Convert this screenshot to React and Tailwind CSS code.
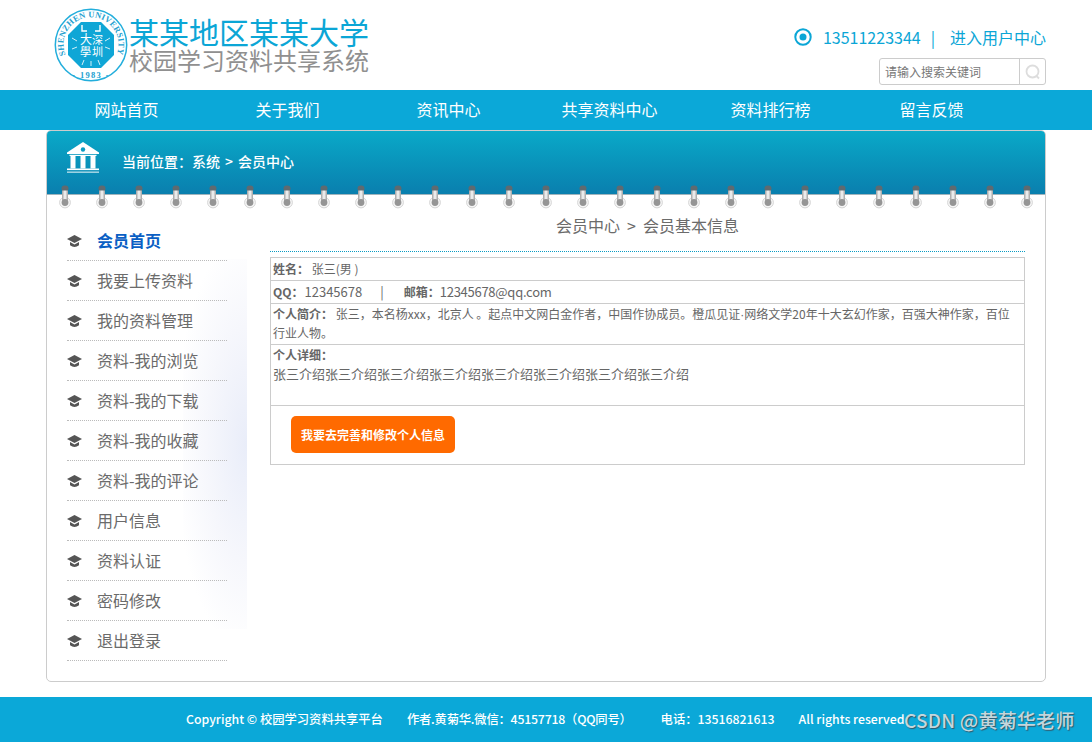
import React from "react";

const font = { fontFamily: '"Noto Sans CJK SC", sans-serif' };
const navItems = ["网站首页", "关于我们", "资讯中心", "共享资料中心", "资料排行榜", "留言反馈"];
const menu = ["会员首页", "我要上传资料", "我的资料管理", "资料-我的浏览", "资料-我的下载", "资料-我的收藏", "资料-我的评论", "用户信息", "资料认证", "密码修改", "退出登录"];

function Seal() {
  return (
    <svg width="74" height="74" viewBox="0 0 74 74" className="shrink-0">
      <defs>
        <path id="arcTop" d="M11.5 47 A27.5 27.5 0 1 1 62.5 47" />
      </defs>
      <circle cx="37" cy="37" r="35.7" fill="none" stroke="#23aedc" strokeWidth="1.5" />
      <polygon points="27,14 47,14 60,27 60,47 47,60 27,60 14,47 14,27" fill="#0fa6d6" />
      <text fontSize="8.5" fontWeight="700" fill="#23a0cf" style={{ fontFamily: '"Liberation Serif", serif' }}>
        <textPath href="#arcTop" textLength="106" lengthAdjust="spacing">SHENZHEN UNIVERSITY</textPath>
      </text>
      <text x="37" y="70" textAnchor="middle" fontSize="8.5" fontWeight="700" fill="#23a0cf" letterSpacing="1.3" style={{ fontFamily: '"Liberation Serif", serif' }}>· 1983 ·</text>
      <path d="M28 17v6h5M46 17v6h-5" fill="none" stroke="#fff" strokeWidth="1.4" />
      <text x="26" y="36" fontSize="12" fill="#fff" style={font}>大</text>
      <text x="38" y="36" fontSize="11" fill="#fff" style={font}>深</text>
      <text x="26" y="48" fontSize="11" fill="#fff" style={font}>學</text>
      <text x="38" y="48" fontSize="11" fill="#fff" style={font}>圳</text>
      <path d="M18 30l5 3M18 41l5-2M56 30l-5 3M56 41l-5-2M28 57l2-5M37 58v-5M46 57l-2-5" stroke="#d5f0f8" strokeWidth="1" />
    </svg>
  );
}

function Bank() {
  return (
    <svg width="32" height="31" viewBox="0 0 32 31" fill="#fff">
      <path d="M16 0L32 10.5V12H0V10.5Z" />
      <circle cx="16" cy="7.5" r="2.2" fill="#0a9cc3" />
      <rect x="2.5" y="12.8" width="27" height="1.2" />
      <rect x="3.5" y="14" width="5" height="12.5" />
      <rect x="13.5" y="14" width="5" height="12.5" />
      <rect x="23.5" y="14" width="5" height="12.5" />
      <rect x="0" y="26.5" width="32" height="1.6" />
      <rect x="0" y="29.4" width="32" height="1.6" opacity="0.6" />
    </svg>
  );
}

function Ring() {
  return (
    <svg width="12" height="25" viewBox="0 0 12 25" className="shrink-0">
      <circle cx="6" cy="18.5" r="5.4" fill="#f6f6f6" stroke="#d4d4d4" strokeWidth="1" />
      <rect x="2.5" y="1.5" width="7" height="6" rx="3" fill="#5f6a70" />
      <rect x="3" y="6.5" width="6" height="10" fill="url(#ringBody)" />
      <circle cx="6" cy="18.5" r="3.4" fill="#959595" />
    </svg>
  );
}

function Cap() {
  return (
    <svg width="15" height="13" viewBox="0 0 15 13" fill="#555555" className="shrink-0 mt-[4px]">
      <path d="M7.5 0L15 4L7.5 8L0 4Z" />
      <path d="M3 7L7.5 9.4L12 7V10.2Q7.5 13.8 3 10.2Z" />
    </svg>
  );
}

function Row({ className = "", children }) {
  return <div className={`border-b border-[#cccccc] px-[2px] ${className}`}>{children}</div>;
}

export default function App() {
  return (
    <div className="w-[1092px] h-[742px] overflow-hidden bg-white flex flex-col text-[#666666]" style={font}>
      <svg width="0" height="0" className="absolute">
        <defs>
          <linearGradient id="ringBody" x1="0" x2="1" y1="0" y2="0">
            <stop offset="0" stopColor="#a0a0a0" />
            <stop offset="0.5" stopColor="#fafafa" />
            <stop offset="1" stopColor="#a0a0a0" />
          </linearGradient>
        </defs>
      </svg>

      <header className="h-[90px] shrink-0 flex justify-between pl-[54px] pr-[46px]">
        <div className="flex items-start pt-[8px]">
          <Seal />
          <div className="ml-[1px] pt-[6px] flex flex-col items-start">
            <div className="text-[30px] leading-[34px] text-[#0ba6d6] whitespace-nowrap">某某地区某某大学</div>
            <div className="text-[24px] leading-[24px] text-[#909090] whitespace-nowrap">校园学习资料共享系统</div>
          </div>
        </div>
        <div className="flex flex-col items-end pt-[25px]">
          <div className="flex items-center h-[24px] text-[16px] text-[#0ba6d6] whitespace-nowrap">
            <svg width="18" height="18" viewBox="0 0 18 18" className="mr-[11px]">
              <circle cx="9" cy="9" r="7.7" fill="none" stroke="#0ba6d6" strokeWidth="2" />
              <circle cx="9" cy="9" r="3.5" fill="#0ba6d6" />
            </svg>
            <span>13511223344</span>
            <span className="ml-[10px] mr-[15px]">|</span>
            <span>进入用户中心</span>
          </div>
          <div className="mt-[9px] w-[167px] h-[27px] flex border border-[#cccccc] rounded-[3px]">
            <div className="flex-1 pl-[5px] text-[12px] leading-[25px] text-[#777777] border-r border-[#cccccc]">请输入搜索关键词</div>
            <div className="w-[25px] flex items-center justify-center">
              <svg width="16" height="16" viewBox="0 0 16 16" fill="none" stroke="#dddddd" strokeWidth="1.8">
                <circle cx="7.5" cy="7.5" r="6" />
                <path d="M11.5 12l2.5 2.5" />
              </svg>
            </div>
          </div>
        </div>
      </header>

      <nav className="h-[40px] shrink-0 bg-[#0ba8d8] pl-[46px] flex">
        {navItems.map((t) => (
          <a key={t} className="w-[161px] text-center text-[16px] leading-[39px] text-white">{t}</a>
        ))}
      </nav>

      <main className="mx-[46px] h-[552px] shrink-0 border border-[#cccccc] rounded-[5px] overflow-hidden flex flex-col">
        <div className="h-[64px] shrink-0 bg-gradient-to-b from-[#0aa9c8] to-[#0a7fae] border-b border-[#9fb4bd] flex items-start pl-[20px] pt-[11px]">
          <Bank />
          <div className="ml-[23px] mt-[9px] text-[14px] leading-[20px] font-medium text-white whitespace-nowrap">当前位置：系统<span className="mx-[5px]">&gt;</span>会员中心</div>
        </div>
        <div className="-mt-[11px] h-[25px] shrink-0 flex gap-[25px] pl-[12px]">
          {Array.from({ length: 27 }, (_, i) => <Ring key={i} />)}
        </div>

        <div className="flex flex-1 min-h-0">
          <aside className="relative w-[200px] shrink-0 pl-[20px] pt-[12px]">
            <div className="absolute right-0 top-[50px] h-[370px] w-[64px] bg-[radial-gradient(ellipse_at_right,#e9edf9_0%,#f6f7fc_45%,#ffffff_80%)]" />
            <ul className="relative w-[160px]">
              {menu.map((t, i) => (
                <li key={t} className="h-[40px] pb-[2px] flex items-center border-b border-dotted border-[#bbbbbb]">
                  <Cap />
                  <span className={`ml-[15px] text-[16px] whitespace-nowrap ${i === 0 ? "font-bold text-[#0a5fc4]" : "text-[#6b6b6b]"}`}>{t}</span>
                </li>
              ))}
            </ul>
          </aside>

          <section className="ml-[23px] w-[755px] shrink-0">
            <div className="h-[44px] border-b border-dotted border-[#0a9cc3] text-center text-[16px] leading-[34px] text-[#6b6b6b] -mt-[1px] whitespace-nowrap">
              会员中心<span className="mx-[7px]">&gt;</span>会员基本信息
            </div>
            <div className="mt-[5px] border border-[#cccccc] text-[12px] text-[#666666]">
              <Row className="h-[23px] leading-[21px]"><b>姓名：</b> 张三(男 )</Row>
              <Row className="h-[23px] leading-[21px] text-[13px] whitespace-nowrap">
                <b className="text-[12px]">QQ：</b><span className="ml-[1px]">12345678</span><span className="ml-[18px] mr-[20px]">|</span><b className="text-[12px]">邮箱：</b><span className="tracking-[-0.27px]">12345678@qq.com</span>
              </Row>
              <Row className="h-[41px] leading-[18px] pt-[1px] pr-[10px]">
                <b>个人简介：</b> 张三，本名杨xxx，北京人 。起点中文网白金作者，中国作协成员。橙瓜见证<span style={{ fontFamily: '"Liberation Sans", sans-serif' }}>·</span>网络文学20年十大玄幻作家，百强大神作家，百位行业人物。
              </Row>
              <Row className="h-[61px] leading-[20px]">
                <b>个人详细：</b>
                <div className="text-[13px] -mt-[1px]">张三介绍张三介绍张三介绍张三介绍张三介绍张三介绍张三介绍张三介绍</div>
              </Row>
              <div className="h-[58px] pl-[20px] pt-[10px]">
                <button className="w-[164px] h-[37px] bg-[#ff6a00] rounded-[5px] text-white text-[12px] font-bold">我要去完善和修改个人信息</button>
              </div>
            </div>
          </section>
        </div>
      </main>

      <footer className="relative mt-[15px] h-[45px] shrink-0 bg-[#0ba8d8] text-white text-[12.3px] font-medium leading-[45px] whitespace-nowrap pl-[186px] flex">
        <span>Copyright © 校园学习资料共享平台</span>
        <span className="ml-[24px] tracking-[-0.2px]">作者.黄菊华.微信：45157718（QQ同号）</span>
        <span className="ml-[29px]">电话：13516821613</span>
        <span className="ml-[24px]">All rights reserved</span>
        <span className="absolute left-[904px] top-0 text-[19px] tracking-[0.2px] text-[#c4d6dc] [text-shadow:1px_1px_1px_#33586a]">CSDN @黄菊华老师</span>
      </footer>
    </div>
  );
}
